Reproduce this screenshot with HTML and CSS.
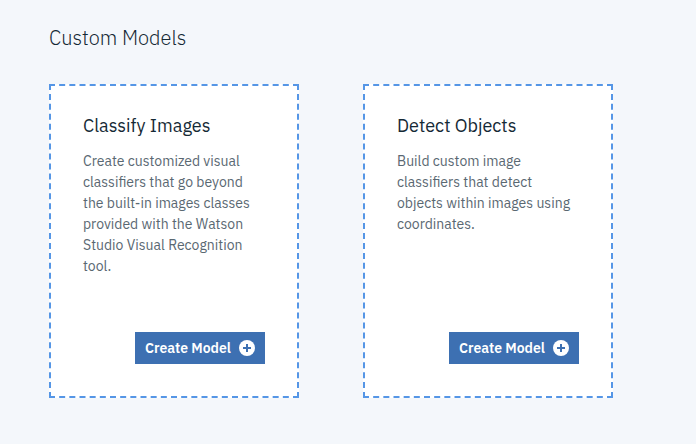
FILE: index.html
```html
<!DOCTYPE html>
<html lang="en">
<head>
<meta charset="utf-8">
<title>Custom Models</title>
<link rel="stylesheet" href="styles.css">
</head>
<body>
<main class="models">
  <h1 class="models-title">Custom Models</h1>
  <div class="cards">
    <section class="card">
      <h2 class="card-title">Classify Images</h2>
      <p class="card-text">Create customized visual classifiers that go beyond the built-in images classes provided with the Watson Studio Visual Recognition tool.</p>
      <button class="create" type="button"><span>Create Model</span><svg class="plus" viewBox="0 0 16 16" aria-hidden="true"><circle cx="8" cy="8" r="8" fill="#fff"/><path d="M8 4v8M4 8h8" stroke="#3d70b2" stroke-width="2"/></svg></button>
    </section>
    <section class="card">
      <h2 class="card-title">Detect Objects</h2>
      <p class="card-text">Build custom image classifiers that detect objects within images using coordinates.</p>
      <button class="create" type="button"><span>Create Model</span><svg class="plus" viewBox="0 0 16 16" aria-hidden="true"><circle cx="8" cy="8" r="8" fill="#fff"/><path d="M8 4v8M4 8h8" stroke="#3d70b2" stroke-width="2"/></svg></button>
    </section>
  </div>
</main>
</body>
</html>
```
FILE: styles.css
```css
* { box-sizing: border-box; }
body { margin: 0; background: #f4f7fb; font-family: "IBM Plex Sans", "Open Sans", sans-serif; }
.models { padding: 24px 49px; }
.models-title { margin: 0 0 32px; font-size: 20px; line-height: 28px; font-weight: 300; color: #152935; }
.cards { display: flex; gap: 64px; }
.card { width: 250px; height: 314px; padding: 30px 32px 32px; border: 2px dashed #5596e6; background: #fff; display: flex; flex-direction: column; }
.card-title { margin: 0; font-size: 18px; line-height: 20px; font-weight: 400; color: #152935; }
.card-text { margin: 15px 0 0; font-size: 14px; line-height: 21px; color: #5a6872; }
.create { margin-top: auto; align-self: flex-end; width: 130px; height: 32px; padding: 0 10px; border: 0; background: #3d70b2; color: #fff; font: 600 14px "IBM Plex Sans", "Open Sans", sans-serif; display: flex; align-items: center; justify-content: space-between; white-space: nowrap; }
.plus { width: 16px; height: 16px; flex: none; }
```
